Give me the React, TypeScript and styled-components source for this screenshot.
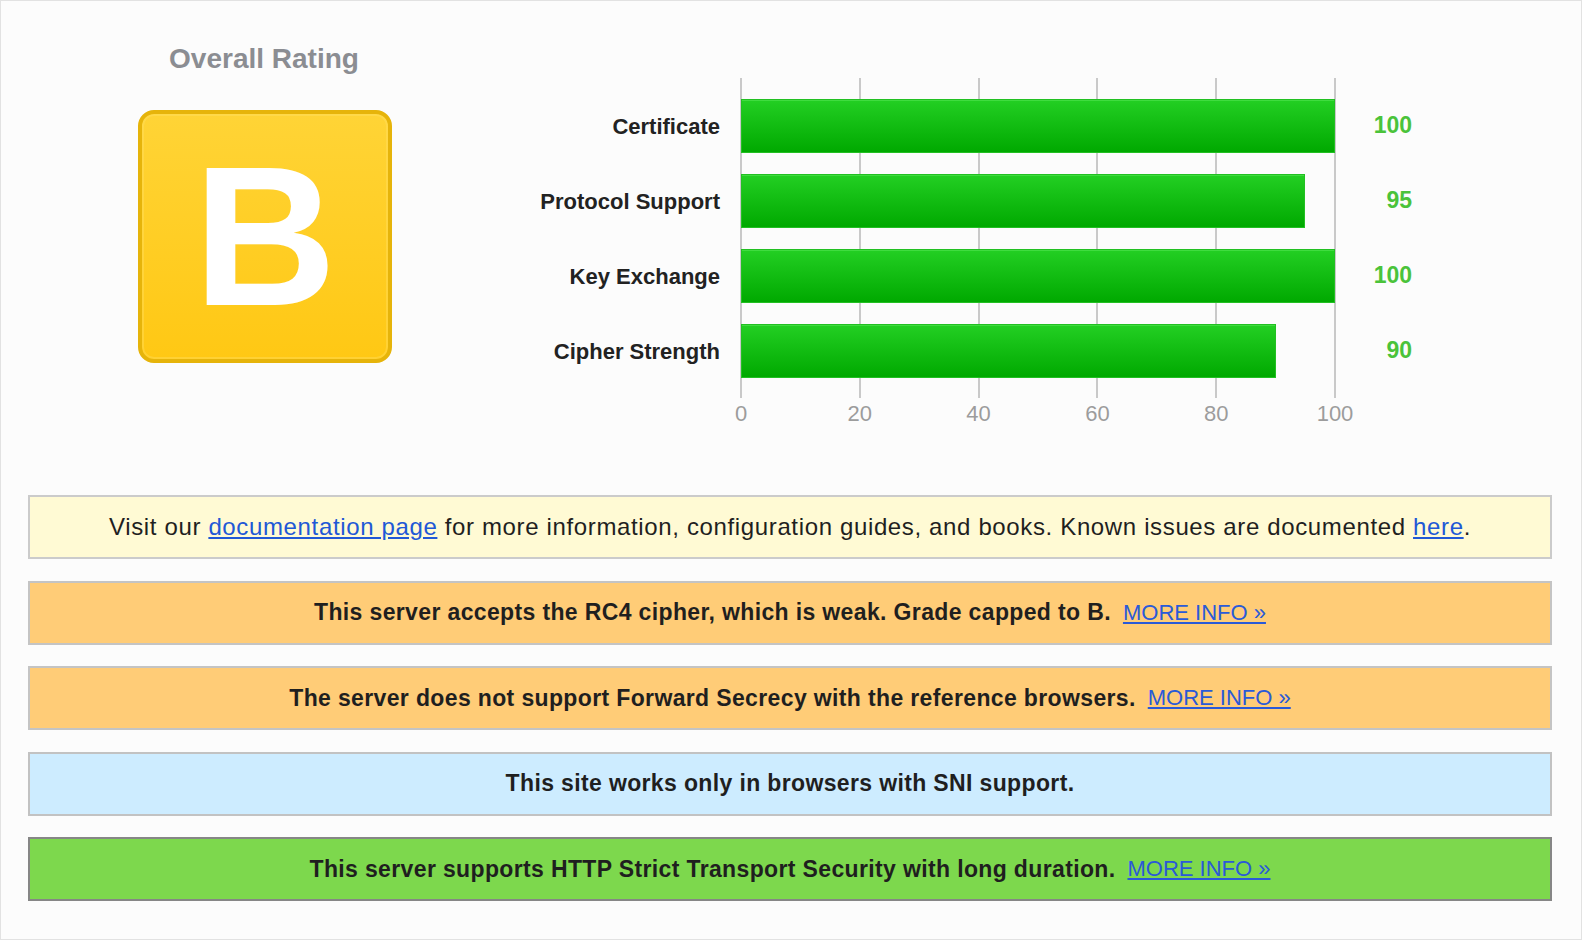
import React from "react";
import styled, { createGlobalStyle } from "styled-components";

const GlobalStyle = createGlobalStyle`
  html, body { margin: 0; padding: 0; background: #fcfcfc; }
  body { font-family: "Liberation Sans", Arial, sans-serif; }
`;

const Page = styled.div`
  width: 1582px;
  height: 940px;
  box-sizing: border-box;
  border: 1px solid #e2e2e2;
  background: #fcfcfc;
  overflow: hidden;
`;

const Top = styled.div`
  display: flex;
  align-items: flex-start;
`;

const RatingColumn = styled.div`
  width: 526px;
  padding-top: 42px;
  display: flex;
  flex-direction: column;
  align-items: center;
`;

const RatingTitle = styled.div`
  font-size: 28px;
  line-height: 32px;
  font-weight: bold;
  color: #8b8d92;
`;

const GradeBox = styled.div`
  margin-top: 35px;
  margin-left: 2px;
  width: 254px;
  height: 253px;
  box-sizing: border-box;
  border: 4px solid #e6b40a;
  border-radius: 16px;
  background: linear-gradient(#ffd436, #ffc814);
  box-shadow: inset 0 0 0 2px rgba(255, 225, 110, 0.35);
  display: flex;
  align-items: center;
  justify-content: center;
  color: #ffffff;
  font-size: 198px;
  line-height: 1;
  font-weight: bold;
`;

const ChartColumn = styled.div`
  padding-top: 77px;
`;

const ChartBody = styled.div`
  position: relative;
  padding: 10px 0;
`;

const GridLine = styled.div`
  position: absolute;
  top: 0;
  bottom: 0;
  width: 2px;
  margin-left: 213px;
  background: #c9c9c9;
  z-index: 0;
`;

const ChartRow = styled.div`
  position: relative;
  z-index: 1;
  display: grid;
  grid-template-columns: 214px 594px 77px;
  height: 75px;
  align-items: center;
`;

const RowLabel = styled.div`
  padding-right: 21px;
  padding-top: 2px;
  text-align: right;
  font-size: 22px;
  font-weight: bold;
  color: #222222;
`;

const BarTrack = styled.div`
  height: 54px;
  display: flex;
`;

const Bar = styled.div`
  height: 100%;
  box-sizing: border-box;
  background: linear-gradient(#23cf23, #00a900);
  border: 1px solid #22c022;
  box-shadow: inset 0 1px 0 #3fdc3f;
`;

const RowValue = styled.div`
  text-align: right;
  font-size: 23px;
  font-weight: bold;
  color: #4ac33a;
`;

const Axis = styled.div`
  display: grid;
  grid-template-columns: 214px 594px 77px;
  margin-top: 4px;
  height: 24px;
`;

const AxisTicks = styled.div`
  grid-column: 2;
  position: relative;
`;

const Tick = styled.span`
  position: absolute;
  top: 0;
  transform: translateX(-50%);
  font-size: 22px;
  line-height: 24px;
  color: #9c9c9c;
`;

const Messages = styled.div`
  margin-top: 69px;
  padding: 0 29px 0 27px;
  display: flex;
  flex-direction: column;
  gap: 21.5px;
`;

type Tone = "note" | "warning" | "info" | "good";

const toneBg: Record<Tone, string> = {
  note: "#fffad4",
  warning: "#ffcc77",
  info: "#cdecff",
  good: "#7dd84d",
};

const toneBorder: Record<Tone, string> = {
  note: "#cbcbcb",
  warning: "#c4c4c4",
  info: "#c2c2c2",
  good: "#868686",
};

const MessageBox = styled.div<{ $tone: Tone }>`
  height: 64px;
  box-sizing: border-box;
  border: 2px solid ${(p) => toneBorder[p.$tone]};
  background: ${(p) => toneBg[p.$tone]};
  display: flex;
  align-items: center;
  justify-content: center;
  color: #1f1f1f;
  font-size: ${(p) => (p.$tone === "note" ? "24px" : "23px")};
  font-weight: ${(p) => (p.$tone === "note" ? "normal" : "bold")};
  letter-spacing: ${(p) => (p.$tone === "note" ? "0.64px" : "0.36px")};
  white-space: nowrap;
`;

const Link = styled.a`
  color: #2158d6;
  text-decoration: underline;
`;

const MoreInfo = styled.a`
  margin-left: 12px;
  color: #2a5ad8;
  font-size: 22px;
  font-weight: normal;
  letter-spacing: 0;
  text-decoration: underline;
`;

const rows = [
  { label: "Certificate", value: 100 },
  { label: "Protocol Support", value: 95 },
  { label: "Key Exchange", value: 100 },
  { label: "Cipher Strength", value: 90 },
];

const ticks = [0, 20, 40, 60, 80, 100];

const messages: { tone: Tone; text: string; more: boolean }[] = [
  { tone: "warning", text: "This server accepts the RC4 cipher, which is weak. Grade capped to B.", more: true },
  { tone: "warning", text: "The server does not support Forward Secrecy with the reference browsers.", more: true },
  { tone: "info", text: "This site works only in browsers with SNI support.", more: false },
  { tone: "good", text: "This server supports HTTP Strict Transport Security with long duration.", more: true },
];

export default function App() {
  return (
    <>
      <GlobalStyle />
      <Page>
        <Top>
          <RatingColumn>
            <RatingTitle>Overall Rating</RatingTitle>
            <GradeBox>B</GradeBox>
          </RatingColumn>
          <ChartColumn>
            <ChartBody>
              {ticks.map((t) => (
                <GridLine key={t} style={{ left: `${(t / 100) * 594}px` }} />
              ))}
              {rows.map((r) => (
                <ChartRow key={r.label}>
                  <RowLabel>{r.label}</RowLabel>
                  <BarTrack>
                    <Bar style={{ width: `${r.value}%` }} />
                  </BarTrack>
                  <RowValue>{r.value}</RowValue>
                </ChartRow>
              ))}
            </ChartBody>
            <Axis>
              <AxisTicks>
                {ticks.map((t) => (
                  <Tick key={t} style={{ left: `${t}%` }}>
                    {t}
                  </Tick>
                ))}
              </AxisTicks>
            </Axis>
          </ChartColumn>
        </Top>
        <Messages>
          <MessageBox $tone="note">
            <span>
              Visit our <Link href="#">documentation page</Link> for more information, configuration guides, and
              books. Known issues are documented <Link href="#">here</Link>.
            </span>
          </MessageBox>
          {messages.map((m) => (
            <MessageBox key={m.text} $tone={m.tone}>
              <span>{m.text}</span>
              {m.more && <MoreInfo href="#">MORE INFO »</MoreInfo>}
            </MessageBox>
          ))}
        </Messages>
      </Page>
    </>
  );
}
